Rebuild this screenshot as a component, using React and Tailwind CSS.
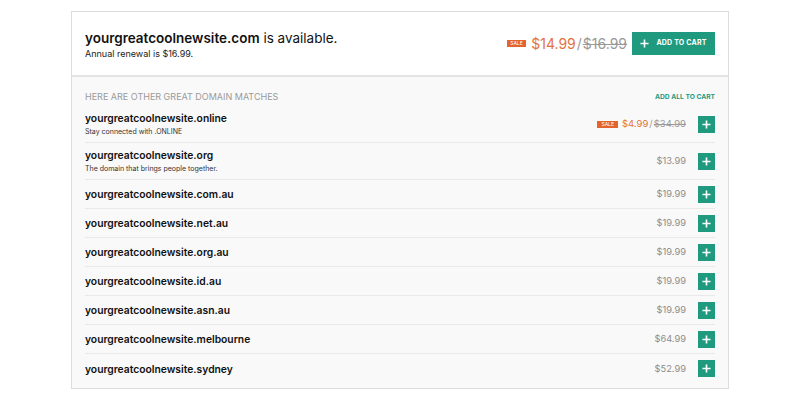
import React from "react";

const others = [
  { name: "yourgreatcoolnewsite.online", note: "Stay connected with .ONLINE", sale: "$4.99", price: "$34.99" },
  { name: "yourgreatcoolnewsite.org", note: "The domain that brings people together.", price: "$13.99" },
  { name: "yourgreatcoolnewsite.com.au", price: "$19.99" },
  { name: "yourgreatcoolnewsite.net.au", price: "$19.99" },
  { name: "yourgreatcoolnewsite.org.au", price: "$19.99" },
  { name: "yourgreatcoolnewsite.id.au", price: "$19.99" },
  { name: "yourgreatcoolnewsite.asn.au", price: "$19.99" },
  { name: "yourgreatcoolnewsite.melbourne", price: "$64.99" },
  { name: "yourgreatcoolnewsite.sydney", price: "$52.99" },
];

const Plus = ({ size = 10, stroke = 2 }) => (
  <svg width={size} height={size} viewBox="0 0 10 10" fill="none" stroke="white" strokeWidth={stroke}>
    <path d="M5 0.5v9M0.5 5h9" />
  </svg>
);

const App = () => {
  return (
    <div className="min-h-screen bg-white pt-[11px]" style={{ fontFamily: "Inter, 'Noto Sans', sans-serif" }}>
      <div className="mx-auto w-[658px] border border-[#dcdcdc]">
        <div className="flex h-[65px] items-center justify-between border-b-2 border-[#e3e3e3] bg-white px-[13px]">
          <div className="pt-[2px]">
            <div className="text-[13.5px] leading-[19px] text-[#111]">
              <span className="font-semibold">yourgreatcoolnewsite.com</span> is available.
            </div>
            <div className="text-[9px] leading-[12px] text-[#222]">Annual renewal is $16.99.</div>
          </div>
          <div className="flex items-center">
            <span className="mr-[5px] bg-[#e4642d] px-[3.5px] text-[5px] leading-[7px] text-white">SALE</span>
            <span className="text-[14px] text-[#e2733d]">$14.99</span>
            <span className="mx-[1px] text-[14px] text-[#999]">/</span>
            <span className="text-[14px] text-[#999] line-through">$16.99</span>
            <button className="ml-[5px] flex h-[23px] w-[83px] items-center justify-center gap-[7px] bg-[#1f9a7f] text-[7px] font-bold tracking-[0.2px] text-white">
              <Plus size={9} stroke={1.8} />
              ADD TO CART
            </button>
          </div>
        </div>
        <div className="bg-[#f9f9f9] px-[13px] pb-[5px]">
          <div className="flex items-center justify-between pt-[13px] pb-[2px]">
            <span className="text-[9px] leading-[14px] text-[#9a9a9a]">HERE ARE OTHER GREAT DOMAIN MATCHES</span>
            <span className="text-[6.7px] font-bold leading-[14px] text-[#1f9a7f]">ADD ALL TO CART</span>
          </div>
          {others.map((d, i) => (
            <div
              key={d.name}
              className={`flex items-center justify-between ${d.note ? "py-[4px]" : "h-[29px]"} ${i < others.length - 1 ? "border-b border-[#e9e9e9]" : ""}`}
            >
              <div>
                <div className="text-[10.3px] font-semibold leading-[16px] text-[#111]">{d.name}</div>
                {d.note && <div className="text-[7px] leading-[12px] text-[#333]">{d.note}</div>}
              </div>
              <div className="flex items-center">
                {d.sale ? (
                  <div className="flex items-center text-[9.5px]">
                    <span className="mr-[4px] bg-[#e4642d] px-[4px] text-[5px] leading-[7px] text-white">SALE</span>
                    <span className="text-[#e2733d]">{d.sale}</span>
                    <span className="mx-[1px] text-[#999]">/</span>
                    <span className="text-[#999] line-through">{d.price}</span>
                  </div>
                ) : (
                  <span className="text-[9.3px] text-[#8d8d8d]">{d.price}</span>
                )}
                <button className="ml-[12px] flex h-[17px] w-[17px] items-center justify-center bg-[#1f9a7f]">
                  <Plus size={9} stroke={1.8} />
                </button>
              </div>
            </div>
          ))}
        </div>
      </div>
    </div>
  );
};

export default App;
